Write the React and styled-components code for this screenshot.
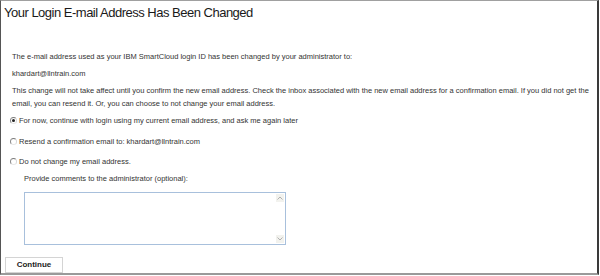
import React from "react";
import styled, { createGlobalStyle } from "styled-components";

const Global = createGlobalStyle`
  html, body { margin: 0; padding: 0; background: #fff; }
  body { font-family: "Liberation Sans", Arial, sans-serif; }
`;

const Frame = styled.div`
  box-sizing: border-box;
  width: 599px;
  height: 275px;
  border-left: 1px solid #555;
  border-top: 1px solid #a0a0a0;
  border-right: 2px solid #3a3a3a;
  border-bottom: 2px solid #9a9a9a;
  background: #fff;
  display: flex;
  flex-direction: column;
  overflow: hidden;
`;

const Title = styled.h1`
  margin: 0;
  padding: 2px 0 0 3px;
  font-size: 13px;
  letter-spacing: -0.5px;
  line-height: 20px;
  font-weight: normal;
  color: #1a1a1a;
  white-space: nowrap;
`;

const Body = styled.div`
  padding: 27px 0 0 11px;
  font-size: 7.5px;
  color: #333;
  display: flex;
  flex-direction: column;
  white-space: nowrap;
`;

const Para = styled.p`
  margin: 0 0 ${(p) => p.$gap ?? 4}px 0;
  line-height: 13px;
`;

const RadioRow = styled.label`
  display: flex;
  align-items: center;
  gap: 2px;
  height: 13px;
  line-height: 13px;
  margin: 0 0 ${(p) => p.$gap ?? 7}px -2px;
`;

const Radio = styled.span`
  position: relative;
  box-sizing: border-box;
  width: 7px;
  height: 7px;
  border-radius: 50%;
  border: 1px solid;
  border-color: #7a7a7a #d8d8d8 #e8e8e8 #8a8a8a;
  background: #fff;
  flex: none;
  &::after {
    content: "";
    display: ${(p) => (p.$checked ? "block" : "none")};
    position: absolute;
    left: 1px;
    top: 1px;
    width: 3px;
    height: 3px;
    border-radius: 50%;
    background: #222;
  }
`;

const Indent = styled.div`
  padding-left: 12px;
  display: flex;
  flex-direction: column;
`;

const TextArea = styled.div`
  position: relative;
  box-sizing: border-box;
  margin-top: 7px;
  width: 262px;
  height: 53px;
  border: 1px solid #a8c0dc;
  background: #fff;
`;

const ScrollArrow = styled.span`
  position: absolute;
  right: 1px;
  ${(p) => (p.$down ? "bottom: 1px;" : "top: 1px;")}
  width: 8px;
  height: 8px;
  background: #f2f2ee;
  display: flex;
  align-items: center;
  justify-content: center;
`;

const Footer = styled.div`
  padding: 8px 0 0 4px;
`;

const Button = styled.button`
  box-sizing: border-box;
  width: 58px;
  height: 16px;
  padding: 0;
  border: 1px solid #d4d4d4;
  background: #fff;
  font-family: "Liberation Sans", Arial, sans-serif;
  font-size: 8px;
  font-weight: bold;
  color: #222;
`;

const Chevron = ({ down }) => (
  <svg width="6" height="4" viewBox="0 0 6 4">
    <path
      d={down ? "M0.5 0.5 L3 3 L5.5 0.5" : "M0.5 3.5 L3 1 L5.5 3.5"}
      fill="none"
      stroke="#b0b0b0"
      strokeWidth="1"
    />
  </svg>
);

export default function App() {
  return (
    <>
      <Global />
      <Frame>
        <Title>Your Login E-mail Address Has Been Changed</Title>
        <Body>
          <Para>The e-mail address used as your IBM SmartCloud login ID has been changed by your administrator to:</Para>
          <Para>khardart@llntrain.com</Para>
          <Para>
            This change will not take affect until you confirm the new email address. Check the inbox associated with the new email address for a confirmation email. If you did not get the
            <br />
            email, you can resend it. Or, you can choose to not change your email address.
          </Para>
          <RadioRow $gap={8}>
            <Radio $checked />
            For now, continue with login using my current email address, and ask me again later
          </RadioRow>
          <RadioRow $gap={7}>
            <Radio />
            Resend a confirmation email to: khardart@llntrain.com
          </RadioRow>
          <RadioRow $gap={4}>
            <Radio />
            Do not change my email address.
          </RadioRow>
          <Indent>
            <Para $gap={0}>Provide comments to the administrator (optional):</Para>
            <TextArea>
              <ScrollArrow>
                <Chevron />
              </ScrollArrow>
              <ScrollArrow $down>
                <Chevron down />
              </ScrollArrow>
            </TextArea>
          </Indent>
        </Body>
        <Footer>
          <Button>Continue</Button>
        </Footer>
      </Frame>
    </>
  );
}
